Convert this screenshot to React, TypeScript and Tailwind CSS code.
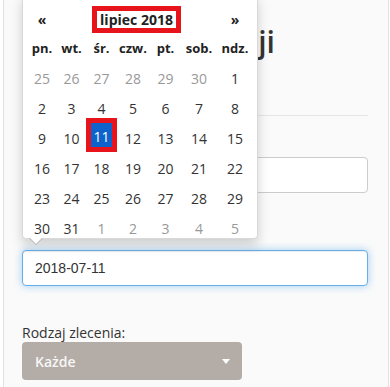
import React from "react";

const weeks: { d: number; muted?: boolean; active?: boolean }[][] = [
  [{ d: 25, muted: true }, { d: 26, muted: true }, { d: 27, muted: true }, { d: 28, muted: true }, { d: 29, muted: true }, { d: 30, muted: true }, { d: 1 }],
  [{ d: 2 }, { d: 3 }, { d: 4 }, { d: 5 }, { d: 6 }, { d: 7 }, { d: 8 }],
  [{ d: 9 }, { d: 10 }, { d: 11, active: true }, { d: 12 }, { d: 13 }, { d: 14 }, { d: 15 }],
  [{ d: 16 }, { d: 17 }, { d: 18 }, { d: 19 }, { d: 20 }, { d: 21 }, { d: 22 }],
  [{ d: 23 }, { d: 24 }, { d: 25 }, { d: 26 }, { d: 27 }, { d: 28 }, { d: 29 }],
  [{ d: 30 }, { d: 31 }, { d: 1, muted: true }, { d: 2, muted: true }, { d: 3, muted: true }, { d: 4, muted: true }, { d: 5, muted: true }],
];

const dows = ["pn.", "wt.", "śr.", "czw.", "pt.", "sob.", "ndz."];

const gridCols = "grid grid-cols-[30px_29px_31px_32px_33px_34px_38px]";

export default function App() {
  return (
    <div className="relative w-[390px] h-[387px] overflow-hidden bg-white font-['Open_Sans','Noto_Sans',sans-serif] text-[#333]">
      <div className="ml-[3px] w-[386px] h-full border-l border-r border-[#e2e2e2] bg-[#fafafa] pl-[18px] pr-[20px] pt-[25px]">
        <div className="flex justify-end w-[253px] h-[33px]">
          <h1 className="whitespace-nowrap text-[30px] leading-[33px] font-semibold text-[#333]">Lista transakcji</h1>
        </div>
        <div className="mt-[57px] border-t border-[#e6e6e6]" />
        <div className="mt-[41px] h-[36px] rounded-[4px] border border-[#cccccc] bg-white" />
        <div className="mt-[57px] h-[36px] rounded-[4px] border border-[#66afe9] bg-white shadow-[inset_0_1px_1px_rgba(0,0,0,0.075),0_0_8px_rgba(102,175,233,0.6)] flex items-center pl-[12px] font-['Liberation_Sans',Arial,sans-serif] text-[14px] text-[#333]">
          2018-07-11
        </div>
        <div className="mt-[37px] h-[19px] text-[14px] leading-[19px] text-[#333]">Rodzaj zlecenia:</div>
        <div className="h-[38px] w-[220px] rounded-[4px] bg-[#b4aca6] flex items-center justify-between pl-[13px] pr-[12px]">
          <span className="text-[14px] font-semibold text-[#f7f7f7]">Każde</span>
          <span className="w-0 h-0 border-t-[5px] border-t-white border-x-[4px] border-x-transparent" />
        </div>
      </div>

      {/* datepicker popup */}
      <div className="absolute left-[22px] top-[-6px] w-[236px] h-[245px] rounded-[4px] border border-[rgba(0,0,0,0.15)] bg-white shadow-[0_6px_12px_rgba(0,0,0,0.175)] pt-[9px] pl-[4px]">
        <div className={`${gridCols} h-[30px] items-center text-[14px] font-bold text-[#222]`}>
          <div className="text-center">«</div>
          <div className="col-span-5 flex justify-center">
            <span className="border-[5px] border-[#e8141c] px-[3px] leading-[17px] whitespace-nowrap">lipiec 2018</span>
          </div>
          <div className="text-center">»</div>
        </div>
        <div className={`${gridCols} h-[29px] items-center text-[13px] font-bold text-[#222]`}>
          {dows.map((d) => (
            <div key={d} className="text-center">{d}</div>
          ))}
        </div>
        {weeks.map((w, i) => (
          <div key={i} className={`${gridCols} h-[30px] items-center text-[14px]`}>
            {w.map((c, j) =>
              c.active ? (
                <div key={j} className="flex justify-center">
                  <div className="-mt-[6px] w-[32px] h-[34px] border-[5px] border-[#e8141c] bg-[#0d63cb] text-white flex items-center justify-center pt-[2px]">
                    {c.d}
                  </div>
                </div>
              ) : (
                <div key={j} className={`text-center ${c.muted ? "text-[#999]" : "text-[#333]"}`}>
                  {c.d}
                </div>
              )
            )}
          </div>
        ))}
        <div className="absolute left-[6px] top-full w-0 h-0 border-t-[7px] border-t-[rgba(0,0,0,0.2)] border-x-[7px] border-x-transparent" />
        <div className="absolute left-[7px] top-full w-0 h-0 border-t-[6px] border-t-white border-x-[6px] border-x-transparent" />
      </div>
    </div>
  );
}
